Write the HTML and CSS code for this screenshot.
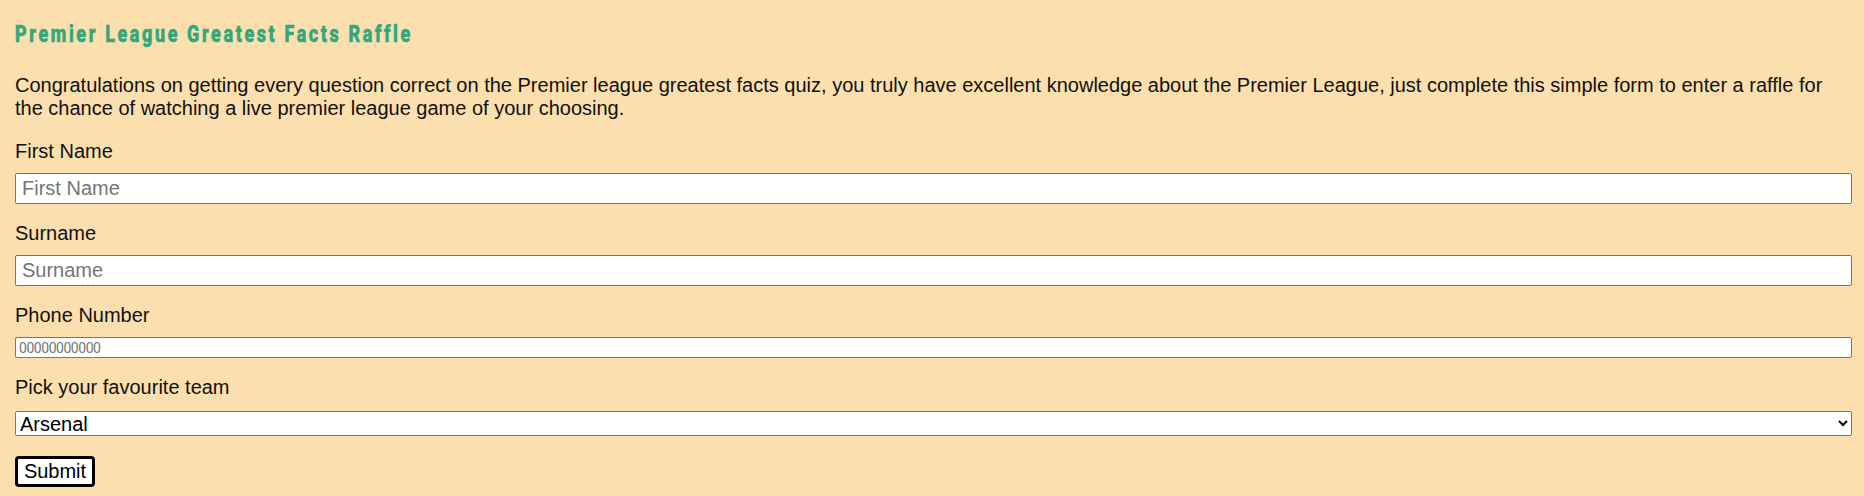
FILE: index.html
```html
<!DOCTYPE html>
<html lang="en">
<head>
<meta charset="utf-8">
<title>Premier League Greatest Facts Raffle</title>
<link rel="stylesheet" href="styles.css">
</head>
<body>
<main class="page">
<h1 class="title">Premier League Greatest Facts Raffle</h1>
<p class="intro">Congratulations on getting every question correct on the Premier league greatest facts quiz, you truly have excellent knowledge about the Premier League, just complete this simple form to enter a raffle for the chance of watching a live premier league game of your choosing.</p>
<form class="form">
<label class="label" for="first">First Name</label>
<input class="field" id="first" type="text" placeholder="First Name">
<label class="label" for="last">Surname</label>
<input class="field" id="last" type="text" placeholder="Surname">
<label class="label" for="phone">Phone Number</label>
<input class="field phone" id="phone" type="tel" placeholder="00000000000">
<label class="label team-label" for="team">Pick your favourite team</label>
<select class="team" id="team"><option>Arsenal</option></select>
<button class="submit" type="button">Submit</button>
</form>
</main>
</body>
</html>
```
FILE: styles.css
```css
* { box-sizing: border-box; }
body { margin: 0; background: #fbdfae; color: #111; font: 20px/23px "Liberation Sans", Arial, sans-serif; }
.page { padding: 19px 12px 0 15px; }
.title { margin: 0; height: 30px; font: 800 23px/32px Roboto, sans-serif; letter-spacing: 3.37px; color: #32a77c; -webkit-text-stroke: .6px #32a77c; transform: scaleX(.78); transform-origin: left; white-space: nowrap; }
.intro { margin: 25px 0 20px; }
.form { display: flex; flex-direction: column; }
.label { display: block; height: 23px; margin-bottom: 10px; }
.team-label { margin-bottom: 12px; }
.field { display: block; width: 100%; height: 31px; margin: 0 0 18px; padding: 1px 6px; border: 1px solid #767676; border-radius: 2px; background: #fff; font: 20px "Liberation Sans", Arial, sans-serif; }
.field::placeholder { color: #757575; }
.phone { height: 21px; padding: 0 3px; font: 14px Roboto, sans-serif; letter-spacing: -.46px; }
.team { height: 25px; width: 100%; margin: 0 0 20px; padding: 0; border: 1px solid #767676; border-radius: 2px; background-color: #fff; color: #000; font: 20px "Liberation Sans", Arial, sans-serif; }
.submit { align-self: flex-start; width: 80px; height: 31px; padding: 0; border: 3px solid #000; border-radius: 4px; background: #fff; color: #000; font: 20px "Liberation Sans", Arial, sans-serif; }
```
